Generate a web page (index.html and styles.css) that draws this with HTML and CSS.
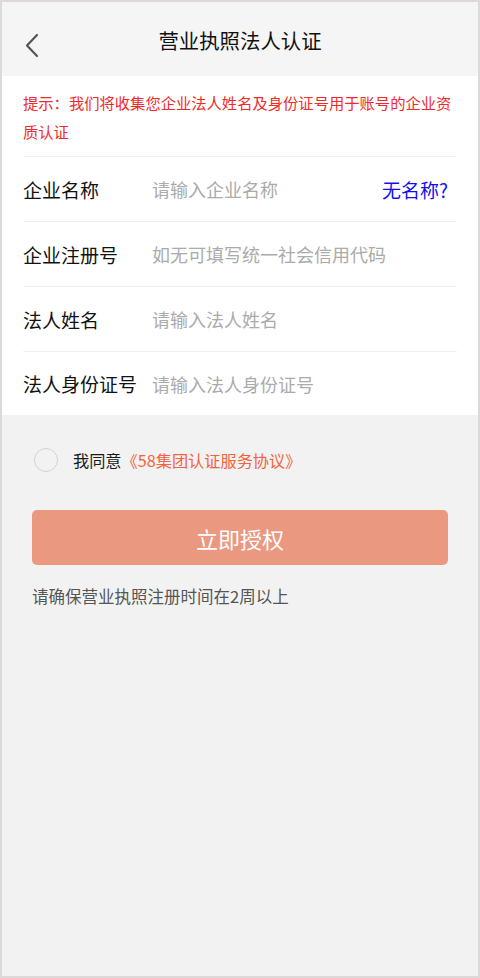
FILE: index.html
```html
<!DOCTYPE html>
<html lang="zh-CN">
<head>
<meta charset="utf-8">
<title>营业执照法人认证</title>
<link rel="stylesheet" href="styles.css">
</head>
<body>
<div class="frame">
  <header class="topbar">
    <svg class="back" width="16" height="26" viewBox="0 0 16 26"><path d="M13 2 L3 12.5 L13 23" fill="none" stroke="#555" stroke-width="2.2" stroke-linecap="round" stroke-linejoin="round"/></svg>
    <h1 class="title">营业执照法人认证</h1>
  </header>
  <section class="panel">
    <p class="tip">提示：我们将收集您企业法人姓名及身份证号用于账号的企业资质认证</p>
    <div class="row">
      <span class="label">企业名称</span>
      <span class="ph">请输入企业名称</span>
      <span class="link-blue">无名称?</span>
    </div>
    <div class="row">
      <span class="label">企业注册号</span>
      <span class="ph">如无可填写统一社会信用代码</span>
    </div>
    <div class="row">
      <span class="label">法人姓名</span>
      <span class="ph">请输入法人姓名</span>
    </div>
    <div class="row">
      <span class="label">法人身份证号</span>
      <span class="ph">请输入法人身份证号</span>
    </div>
  </section>
  <section class="bottom">
    <div class="agree">
      <span class="radio"></span>
      <span class="agree-text">我同意</span><span class="agree-link">《58集团认证服务协议》</span>
    </div>
    <button class="btn">立即授权</button>
    <p class="note">请确保营业执照注册时间在2周以上</p>
  </section>
</div>
</body>
</html>
```
FILE: styles.css
```css
* { box-sizing: border-box; }
html, body { margin: 0; padding: 0; }
body {
  font-family: "Noto Sans CJK SC", "Noto Sans", sans-serif;
  background: #f2f2f2;
}
.frame {
  width: 480px;
  height: 978px;
  border: 2px solid #ddd9d9;
  background: #f2f2f2;
  display: flex;
  flex-direction: column;
}
.topbar {
  height: 74px;
  background: #f5f5f5;
  display: flex;
  align-items: center;
  justify-content: center;
  position: relative;
}
.back {
  position: absolute;
  left: 22px;
  top: 31px;
}
.title {
  margin: 0;
  font-size: 20.4px;
  font-weight: 400;
  color: #111;
  line-height: 1;
  margin-top: 2px;
}
.panel {
  background: #fff;
  padding: 0 21px;
}
.tip {
  margin: 0;
  padding: 12px 0 10px;
  color: #f22a2a;
  font-size: 15.3px;
  line-height: 29px;
  border-bottom: 1px solid #f0f0f0;
}
.row {
  height: 65px;
  display: flex;
  align-items: center;
  border-bottom: 1px solid #f0f0f0;
}
.row:last-child { border-bottom: none; height: 63px; }
.label {
  width: 129px;
  font-size: 19px;
  color: #111;
  white-space: nowrap;
}
.ph {
  flex: 1;
  font-size: 18px;
  color: #ababab;
  white-space: nowrap;
}
.link-blue {
  font-size: 19px;
  color: #1010ee;
  margin-right: 9px;
}
.bottom {
  flex: 1;
  padding: 0 30px;
}
.agree {
  display: flex;
  align-items: center;
  margin-top: 32px;
  height: 26px;
  padding-left: 2px;
}
.radio {
  width: 24px;
  height: 24px;
  border: 1.5px solid #d2d2d2;
  border-radius: 50%;
  margin-right: 15px;
}
.agree-text {
  font-size: 16.2px;
  color: #1a1a1a;
}
.agree-link {
  font-size: 16.2px;
  color: #f2643f;
}
.btn {
  display: block;
  width: 416px;
  height: 55px;
  margin-top: 37px;
  border: none;
  border-radius: 5px;
  background: #eb9881;
  color: #fff;
  font-family: inherit;
  font-size: 22px;
  padding: 0;
}
.note {
  margin: 19px 0 0;
  font-size: 16.5px;
  color: #555;
  line-height: 24px;
}
```
